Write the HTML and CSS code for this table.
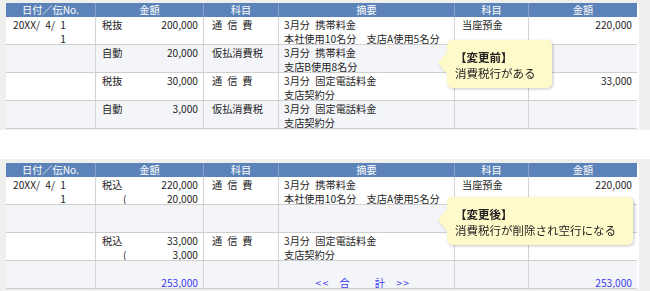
FILE: index.html
```html
<!DOCTYPE html>
<html lang="ja">
<head>
<meta charset="utf-8">
<link rel="stylesheet" href="styles.css">
</head>
<body>
<section class="panel panel-top">
  <div class="sheet">
    <div class="grid">
      <div class="hd">日付／伝No.</div><div class="hd">金額</div><div class="hd">科目</div><div class="hd">摘要</div><div class="hd">科目</div><div class="hd hd-last">金額</div>

      <div class="c c1"><span class="date">20XX/ 4/ 1<br>1</span></div>
      <div class="c c2"><div class="ln"><span>税抜</span><span>200,000</span></div></div>
      <div class="c c3"><span class="sp">通信費</span></div>
      <div class="c c4">3月分 携帯料金<br>本社使用10名分　支店A使用5名分</div>
      <div class="c c5">当座預金</div>
      <div class="c c6 num">220,000</div>

      <div class="c c1 alt"></div>
      <div class="c c2 alt"><div class="ln"><span>自動</span><span>20,000</span></div></div>
      <div class="c c3 alt">仮払消費税</div>
      <div class="c c4 alt">3月分 携帯料金<br>支店B使用8名分</div>
      <div class="c c5 alt"></div>
      <div class="c c6 alt num"></div>

      <div class="c c1"></div>
      <div class="c c2"><div class="ln"><span>税抜</span><span>30,000</span></div></div>
      <div class="c c3"><span class="sp">通信費</span></div>
      <div class="c c4">3月分 固定電話料金<br>支店契約分</div>
      <div class="c c5"></div>
      <div class="c c6 num">33,000</div>

      <div class="c c1 alt"></div>
      <div class="c c2 alt"><div class="ln"><span>自動</span><span>3,000</span></div></div>
      <div class="c c3 alt">仮払消費税</div>
      <div class="c c4 alt">3月分 固定電話料金<br>支店契約分</div>
      <div class="c c5 alt"></div>
      <div class="c c6 alt num"></div>
    </div>
  </div>
  <div class="callout callout-top">
    <strong>【変更前】</strong><br>消費税行がある
  </div>
</section>

<section class="panel panel-bottom">
  <div class="sheet">
    <div class="grid">
      <div class="hd">日付／伝No.</div><div class="hd">金額</div><div class="hd">科目</div><div class="hd">摘要</div><div class="hd">科目</div><div class="hd hd-last">金額</div>

      <div class="c c1"><span class="date">20XX/ 4/ 1<br>1</span></div>
      <div class="c c2"><div class="ln"><span>税込</span><span>220,000</span></div><div class="ln"><span class="paren">(</span><span>20,000</span></div></div>
      <div class="c c3"><span class="sp">通信費</span></div>
      <div class="c c4">3月分 携帯料金<br>本社使用10名分　支店A使用5名分</div>
      <div class="c c5">当座預金</div>
      <div class="c c6 num">220,000</div>

      <div class="c c1 alt"></div>
      <div class="c c2 alt"></div>
      <div class="c c3 alt"></div>
      <div class="c c4 alt"></div>
      <div class="c c5 alt"></div>
      <div class="c c6 alt"></div>

      <div class="c c1"></div>
      <div class="c c2"><div class="ln"><span>税込</span><span>33,000</span></div><div class="ln"><span class="paren">(</span><span>3,000</span></div></div>
      <div class="c c3"><span class="sp">通信費</span></div>
      <div class="c c4">3月分 固定電話料金<br>支店契約分</div>
      <div class="c c5"></div>
      <div class="c c6 num"></div>

      <div class="c c1 alt"></div>
      <div class="c c2 alt num total"><br>253,000</div>
      <div class="c c3 alt"></div>
      <div class="c c4 alt total center"><br><span class="sum">&lt;&lt; 合　　計 &gt;&gt;</span></div>
      <div class="c c5 alt"></div>
      <div class="c c6 alt num total"><br>253,000</div>
    </div>
  </div>
  <div class="callout callout-bottom">
    <strong>【変更後】</strong><br>消費税行が削除され空行になる
  </div>
</section>
</body>
</html>
```

FILE: styles.css
```css
html, body {
  margin: 0;
  padding: 0;
  background: #ffffff;
}
body {
  font-family: "Noto Sans CJK JP", "Noto Sans", sans-serif;
  color: #1e1e1e;
  width: 650px;
}
.panel {
  position: relative;
  background: #efefef;
  padding-left: 6px;
  overflow: hidden;
}
.panel-top {
  height: 130px;
  padding-top: 3px;
  box-sizing: border-box;
}
.panel-bottom {
  margin-top: 29px;
  height: 132px;
  padding-top: 4px;
  box-sizing: border-box;
}
.sheet {
  width: 633px;
  background: #ffffff;
}
.grid {
  display: grid;
  grid-template-columns: 90px 108px 75px 176px 74px 108px;
  grid-auto-rows: 28px;
  grid-template-rows: 14px;
  font-size: 10.2px;
  line-height: 14px;
  word-spacing: 3px;
}
.hd {
  background: #5b83b9;
  color: #ffffff;
  text-align: center;
  border-right: 1px solid #86a2cb;
  line-height: 14px;
}
.hd-last {
  border-right: none;
}
.c {
  box-sizing: border-box;
  border-right: 1px solid #d3d3d3;
  border-bottom: 1px solid #cfcfcf;
  padding: 1px 5px 0 6px;
  background: #ffffff;
  white-space: nowrap;
  overflow: hidden;
}
.c6 {
  border-right: none;
}
.alt {
  background: #f4f5f9;
}
.c1 {
  padding-left: 7px;
}
.date {
  display: inline-block;
  text-align: right;
}
.c3 {
  padding-left: 8px;
}
.c4 {
  padding-left: 5px;
}
.c5 {
  padding-left: 7px;
}
.sp {
  letter-spacing: 5px;
}
.ln {
  display: flex;
  justify-content: space-between;
}
.paren {
  padding-left: 21px;
}
.num {
  text-align: right;
}
.total {
  color: #3a3af0;
}
.center {
  text-align: center;
  padding-right: 12px;
}
.sum {
  letter-spacing: 1.5px;
  word-spacing: 6px;
}
.callout {
  position: absolute;
  left: 447px;
  height: 48px;
  box-sizing: border-box;
  padding: 9px 0 0 8px;
  background: #fffac9;
  border-radius: 5px;
  font-size: 11.5px;
  line-height: 16px;
  color: #222222;
  white-space: nowrap;
  filter: drop-shadow(1px 1px 1.5px rgba(0, 0, 0, 0.22));
}
.callout strong {
  font-weight: 700;
}
.callout::before {
  content: "";
  position: absolute;
  left: -9px;
  top: 12px;
  border-right: 9px solid #fffac9;
  border-top: 11px solid transparent;
  border-bottom: 11px solid transparent;
}
.callout-top {
  top: 40px;
  width: 105px;
}
.callout-bottom {
  top: 38px;
  width: 186px;
}
```
